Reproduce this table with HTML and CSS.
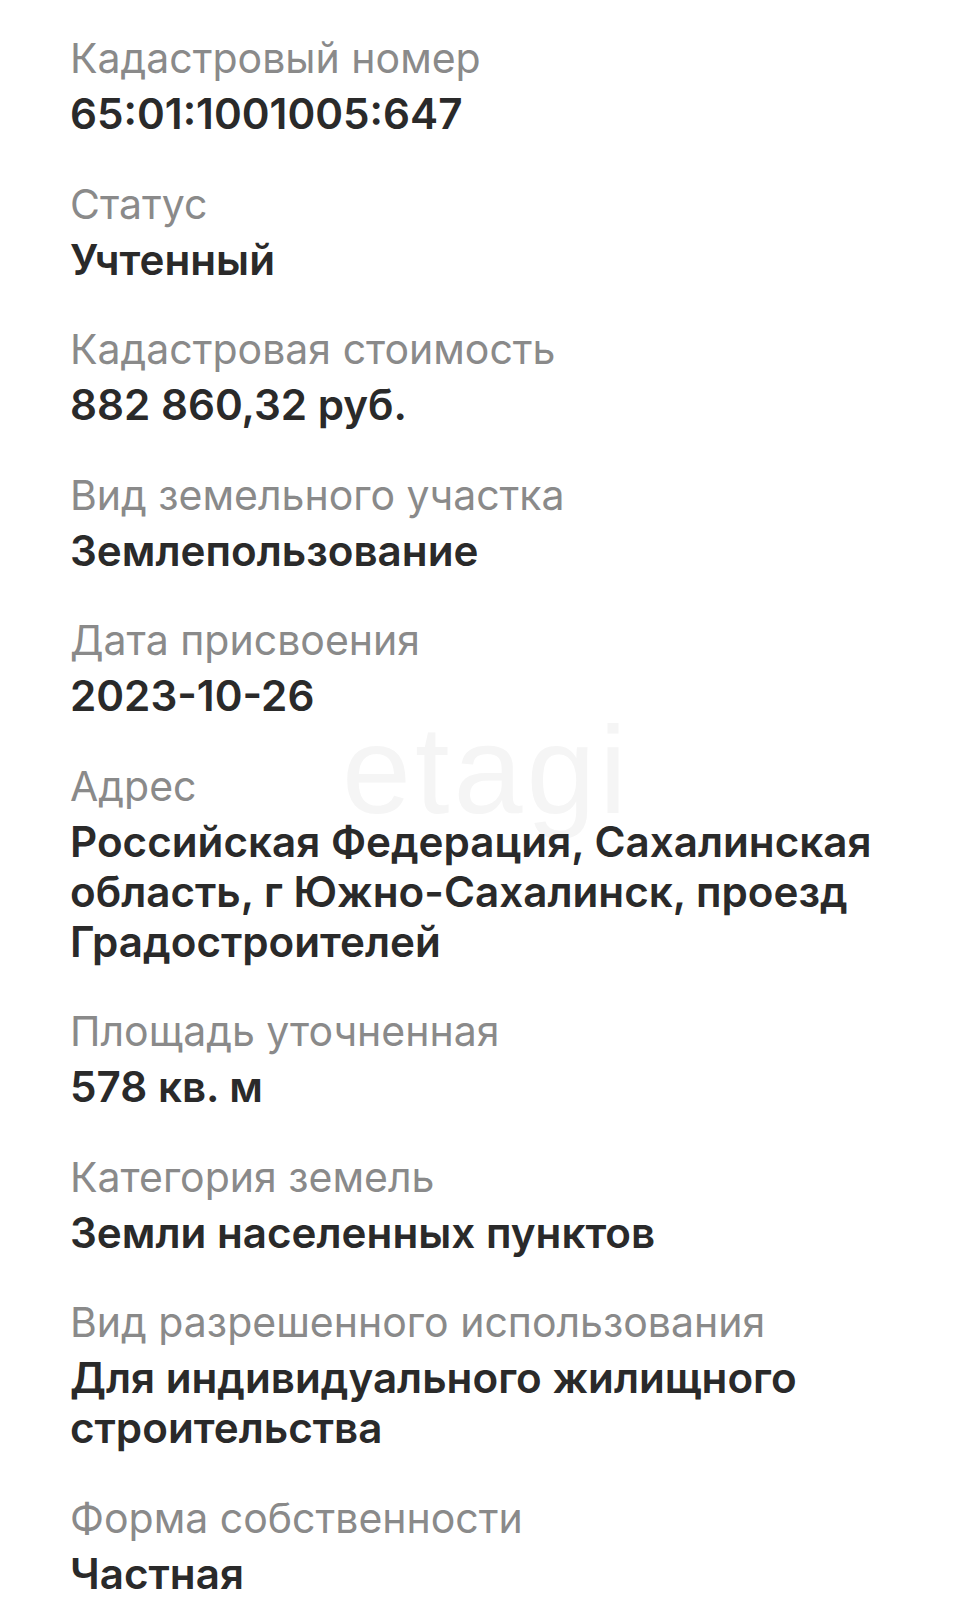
FILE: index.html
```html
<!DOCTYPE html>
<html lang="ru">
<head>
<meta charset="utf-8">
<title>Участок</title>
<link rel="stylesheet" href="styles.css">
</head>
<body>
<main class="sheet">
  <div class="watermark" aria-hidden="true">etagi</div>
  <dl class="props">
    <div class="item"><dt class="label">Кадастровый номер</dt><dd class="value">65:01:1001005:647</dd></div>
    <div class="item"><dt class="label">Статус</dt><dd class="value">Учтенный</dd></div>
    <div class="item"><dt class="label">Кадастровая стоимость</dt><dd class="value">882 860,32 руб.</dd></div>
    <div class="item"><dt class="label">Вид земельного участка</dt><dd class="value">Землепользование</dd></div>
    <div class="item"><dt class="label">Дата присвоения</dt><dd class="value">2023-10-26</dd></div>
    <div class="item"><dt class="label">Адрес</dt><dd class="value">Российская Федерация, Сахалинская область, г Южно-Сахалинск, проезд Градостроителей</dd></div>
    <div class="item"><dt class="label">Площадь уточненная</dt><dd class="value">578 кв. м</dd></div>
    <div class="item"><dt class="label">Категория земель</dt><dd class="value">Земли населенных пунктов</dd></div>
    <div class="item"><dt class="label">Вид разрешенного использования</dt><dd class="value">Для индивидуального жилищного строительства</dd></div>
    <div class="item"><dt class="label">Форма собственности</dt><dd class="value">Частная</dd></div>
  </dl>
</main>
</body>
</html>
```

FILE: styles.css
```css
html, body {
  margin: 0;
  padding: 0;
  background: #ffffff;
}

body {
  font-family: Inter, "Noto Sans", "Liberation Sans", sans-serif;
}

.sheet {
  position: relative;
  padding: 35px 60px 0 70px;
}

.watermark {
  position: absolute;
  left: 342px;
  top: 700px;
  font-family: "Liberation Sans", Arial, sans-serif;
  font-size: 124px;
  line-height: 140px;
  letter-spacing: 4px;
  color: #f5f5f5;
  z-index: 0;
}

.props {
  position: relative;
  z-index: 1;
  margin: 0;
  display: flex;
  flex-direction: column;
  gap: 41.5px;
}

.item {
  display: flex;
  flex-direction: column;
  gap: 8px;
}

.label {
  font-size: 41px;
  line-height: 46px;
  font-weight: 400;
  color: #8a8a8a;
  margin: 0;
}

.value {
  font-size: 42.2px;
  line-height: 50px;
  font-weight: 600;
  color: #2a2a2a;
  margin: 0;
}
```
